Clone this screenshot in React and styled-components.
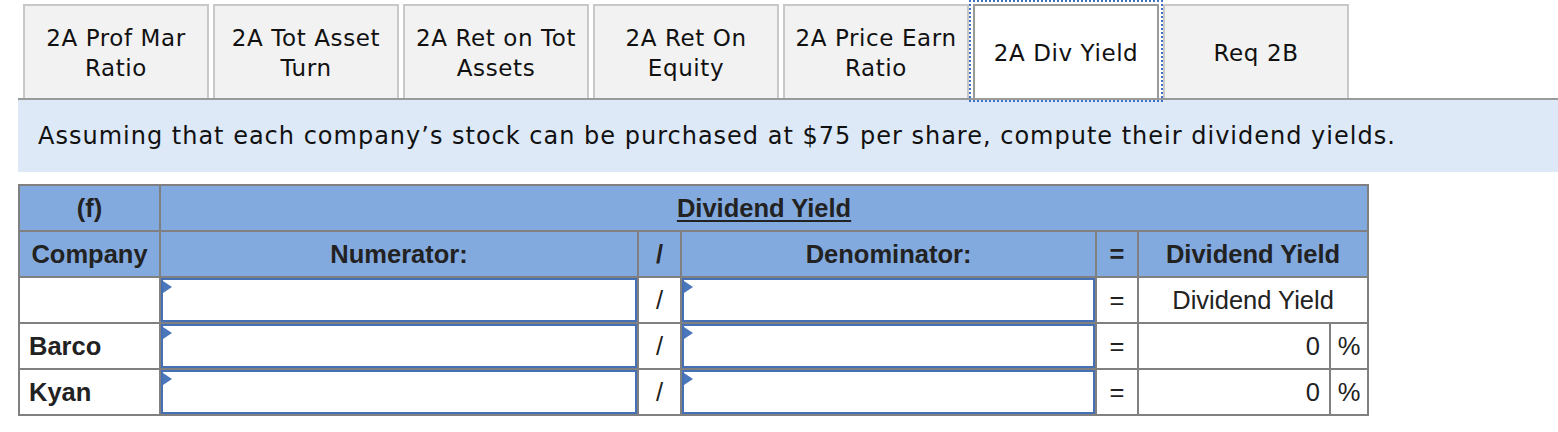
import React from "react";
import styled, { createGlobalStyle, css } from "styled-components";

const Global = createGlobalStyle`
  html, body { margin: 0; padding: 0; background: #ffffff; }
  body { font-family: "Liberation Sans", Arial, sans-serif; }
`;

const Page = styled.div`
  padding-left: 18px;
  width: 1540px;
`;

const TabBar = styled.div`
  display: flex;
  align-items: flex-end;
  gap: 4px;
  padding: 4px 0 0 5px;
  border-bottom: 2px solid #9a9a9a;
`;

const Tab = styled.div`
  box-sizing: border-box;
  width: 186px;
  height: 94px;
  padding-top: 2px;
  display: flex;
  align-items: center;
  justify-content: center;
  text-align: center;
  font-family: "DejaVu Sans", Verdana, sans-serif;
  font-size: 23px;
  letter-spacing: 0.6px;
  line-height: 30px;
  color: #111;
  background: #f2f2f2;
  border: 2px solid #c8c8c8;
  border-bottom: none;
  ${(p) =>
    p.$active &&
    css`
      background: #ffffff;
      border-color: #9a9a9a;
      outline: 2px dotted #3f72c4;
      outline-offset: 2px;
    `}
`;

const Banner = styled.div`
  height: 72px;
  display: flex;
  align-items: center;
  padding-left: 20px;
  background: #dde9f7;
  font-family: "DejaVu Sans", Verdana, sans-serif;
  font-size: 24px;
  letter-spacing: 1px;
  color: #111;
`;

const Table = styled.table`
  margin-top: 12px;
  border-collapse: collapse;
  table-layout: fixed;
  width: 1349px;
  border: 2px solid #808080;
  font-family: "Liberation Sans", Arial, sans-serif;
  font-size: 25.5px;
  color: #222;
`;

const Row = styled.tr`
  height: 46px;
  background: ${(p) => (p.$head ? "#82aadf" : "#ffffff")};
`;

const Cell = styled.td`
  border: 2px solid #808080;
  padding: ${(p) => (p.$input ? "0" : "0 9px")};
  text-align: ${(p) => p.$align || "center"};
  font-weight: ${(p) => (p.$bold ? 700 : 400)};
  vertical-align: middle;
  white-space: nowrap;
  color: #222;
`;

const Underlined = styled.span`
  text-decoration: underline;
  text-underline-offset: 3px;
`;

const InputBox = styled.div`
  position: relative;
  box-sizing: border-box;
  height: 44px;
  border: 2px solid #4670b6;
  background: #fff;
`;

const Flag = styled.span`
  position: absolute;
  left: 0;
  top: 1px;
  width: 0;
  height: 0;
  border-top: 6px solid transparent;
  border-bottom: 6px solid transparent;
  border-left: 9px solid #4a76bb;
`;

const Input = () => (
  <InputBox>
    <Flag />
  </InputBox>
);

const tabs = [
  ["2A Prof Mar", "Ratio"],
  ["2A Tot Asset", "Turn"],
  ["2A Ret on Tot", "Assets"],
  ["2A Ret On", "Equity"],
  ["2A Price Earn", "Ratio"],
  ["2A Div Yield"],
  ["Req 2B"],
];

const companies = ["Barco", "Kyan"];

export default function App() {
  return (
    <>
      <Global />
      <Page>
        <TabBar>
          {tabs.map((t, i) => (
            <Tab key={i} $active={i === 5}>
              <div>
                {t.map((l, j) => (
                  <div key={j}>{l}</div>
                ))}
              </div>
            </Tab>
          ))}
        </TabBar>
        <Banner>
          Assuming that each company’s stock can be purchased at $75 per share, compute their dividend yields.
        </Banner>
        <Table>
          <colgroup>
            <col style={{ width: 141 }} />
            <col style={{ width: 478 }} />
            <col style={{ width: 43 }} />
            <col style={{ width: 415 }} />
            <col style={{ width: 42 }} />
            <col style={{ width: 192 }} />
            <col style={{ width: 38 }} />
          </colgroup>
          <tbody>
            <Row $head>
              <Cell $bold>(f)</Cell>
              <Cell $bold colSpan={6}>
                <Underlined>Dividend Yield</Underlined>
              </Cell>
            </Row>
            <Row $head>
              <Cell $bold>Company</Cell>
              <Cell $bold>Numerator:</Cell>
              <Cell $bold>/</Cell>
              <Cell $bold>Denominator:</Cell>
              <Cell $bold>=</Cell>
              <Cell $bold colSpan={2}>Dividend Yield</Cell>
            </Row>
            <Row>
              <Cell />
              <Cell $input><Input /></Cell>
              <Cell>/</Cell>
              <Cell $input><Input /></Cell>
              <Cell>=</Cell>
              <Cell colSpan={2}>Dividend Yield</Cell>
            </Row>
            {companies.map((c) => (
              <Row key={c}>
                <Cell $bold $align="left">{c}</Cell>
                <Cell $input><Input /></Cell>
                <Cell>/</Cell>
                <Cell $input><Input /></Cell>
                <Cell>=</Cell>
                <Cell $align="right">0</Cell>
                <Cell $input>%</Cell>
              </Row>
            ))}
          </tbody>
        </Table>
      </Page>
    </>
  );
}
